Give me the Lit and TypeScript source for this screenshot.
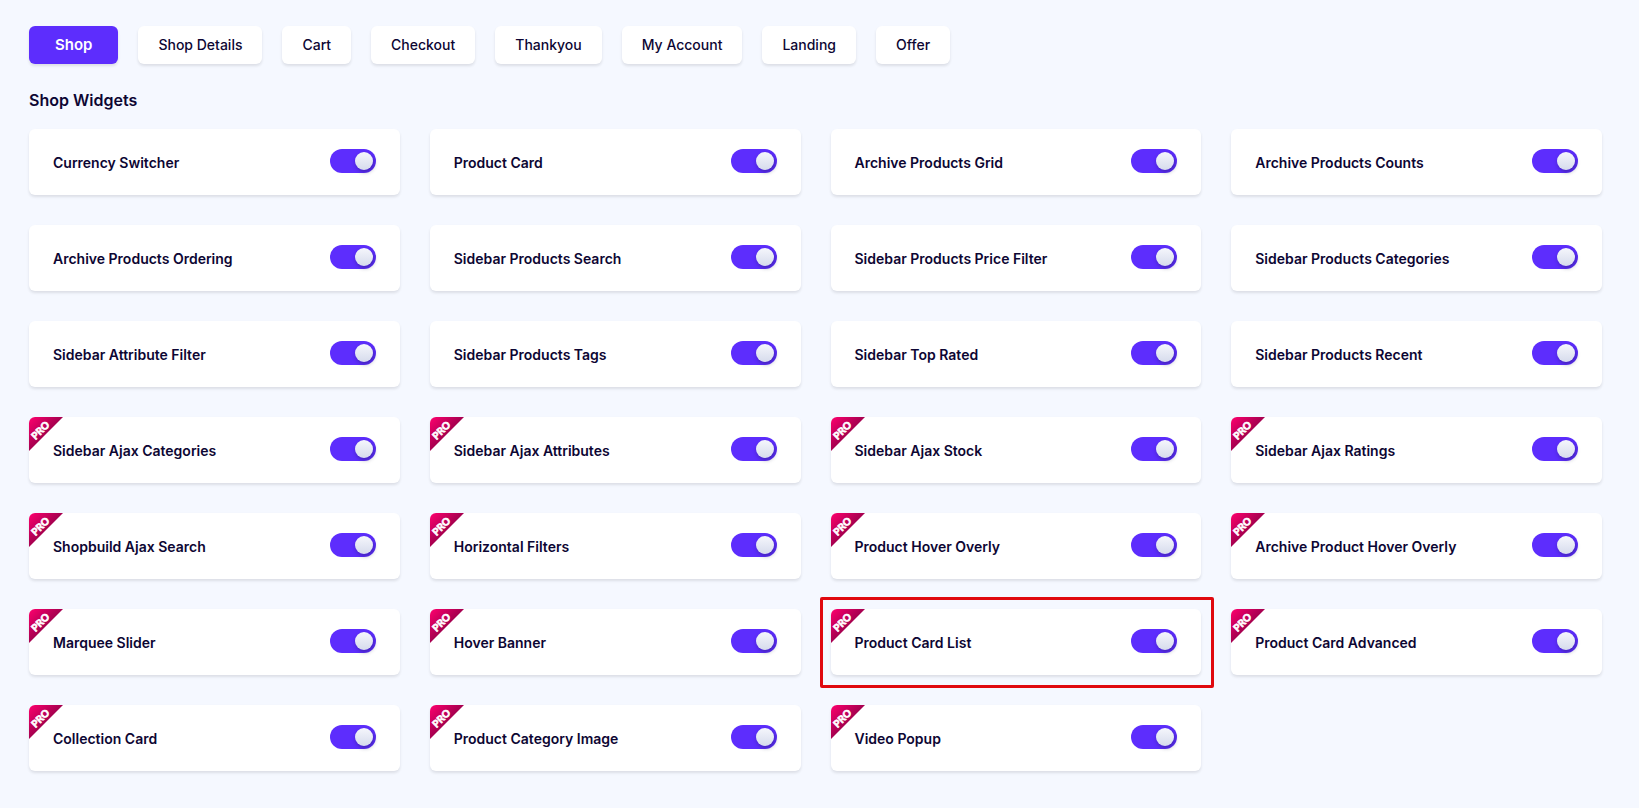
import { LitElement, html, css, nothing } from "lit";
import { customElement, property, state } from "lit/decorators.js";
import { classMap } from "lit/directives/class-map.js";

interface Widget {
  name: string;
  pro?: boolean;
  marked?: boolean;
}

const TABS = ["Shop", "Shop Details", "Cart", "Checkout", "Thankyou", "My Account", "Landing", "Offer"];

const WIDGETS: Widget[] = [
  { name: "Currency Switcher" },
  { name: "Product Card" },
  { name: "Archive Products Grid" },
  { name: "Archive Products Counts" },
  { name: "Archive Products Ordering" },
  { name: "Sidebar Products Search" },
  { name: "Sidebar Products Price Filter" },
  { name: "Sidebar Products Categories" },
  { name: "Sidebar Attribute Filter" },
  { name: "Sidebar Products Tags" },
  { name: "Sidebar Top Rated" },
  { name: "Sidebar Products Recent" },
  { name: "Sidebar Ajax Categories", pro: true },
  { name: "Sidebar Ajax Attributes", pro: true },
  { name: "Sidebar Ajax Stock", pro: true },
  { name: "Sidebar Ajax Ratings", pro: true },
  { name: "Shopbuild Ajax Search", pro: true },
  { name: "Horizontal Filters", pro: true },
  { name: "Product Hover Overly", pro: true },
  { name: "Archive Product Hover Overly", pro: true },
  { name: "Marquee Slider", pro: true },
  { name: "Hover Banner", pro: true },
  { name: "Product Card List", pro: true, marked: true },
  { name: "Product Card Advanced", pro: true },
  { name: "Collection Card", pro: true },
  { name: "Product Category Image", pro: true },
  { name: "Video Popup", pro: true },
];

@customElement("widget-card")
export class WidgetCard extends LitElement {
  @property({ type: String }) name = "";
  @property({ type: Boolean }) pro = false;
  @property({ type: Boolean }) marked = false;

  static styles = css`
    :host {
      display: block;
    }
    .card {
      position: relative;
      display: flex;
      align-items: flex-start;
      justify-content: space-between;
      gap: 16px;
      padding: 20px 24px 22px;
      background: #fff;
      border-radius: 6px;
      box-shadow: 0 2px 3px rgba(20, 20, 30, 0.11);
    }
    .marked::after {
      content: "";
      position: absolute;
      inset: -12px -13px -13px -11px;
      border: 3px solid #e0090f;
      border-radius: 2px;
      pointer-events: none;
    }
    .name {
      padding-top: 4px;
      font-size: 14px;
      line-height: 20px;
      font-weight: 600;
      color: #0d0633;
    }
    .switch {
      appearance: none;
      flex: none;
      display: flex;
      justify-content: flex-start;
      align-items: center;
      box-sizing: border-box;
      width: 46px;
      height: 24px;
      margin: 0;
      padding: 3px;
      border-radius: 12px;
      background: #c9cde0;
      cursor: pointer;
    }
    .switch:checked {
      justify-content: flex-end;
      background: #5d2dfd;
    }
    .switch::before {
      content: "";
      width: 18px;
      height: 18px;
      border-radius: 50%;
      background: linear-gradient(#f5f6fc, #d6dbec);
      box-shadow: 1px 2px 4px rgba(20, 20, 60, 0.4);
    }
    .badge {
      position: absolute;
      top: 0;
      left: 0;
      width: 34px;
      height: 34px;
      border-radius: 6px 0 0 0;
      overflow: hidden;
    }
    .badge text {
      font: 900 10px Lato, sans-serif;
      fill: #fff;
      stroke: #fff;
      stroke-width: 0.6px;
    }
  `;

  render() {
    return html`
      <div class=${classMap({ card: true, marked: this.marked })}>
        ${this.pro
          ? html`<svg class="badge" viewBox="0 0 34 34">
              <defs>
                <linearGradient id="pro" x1="0" y1="0" x2="1" y2="1">
                  <stop offset="0" stop-color="#ff006e" />
                  <stop offset="0.5" stop-color="#a6004f" />
                </linearGradient>
              </defs>
              <path d="M0 0H34L0 34Z" fill="url(#pro)" />
              <text x="11" y="17" text-anchor="middle" transform="rotate(-45 11 13)">PRO</text>
            </svg>`
          : nothing}
        <label class="name" for="toggle">${this.name}</label>
        <input class="switch" id="toggle" type="checkbox" role="switch" checked />
      </div>
    `;
  }
}

@customElement("app-root")
export class AppRoot extends LitElement {
  @state() private active = "Shop";

  static styles = css`
    :host {
      display: block;
      box-sizing: border-box;
      min-height: 100vh;
      padding: 26px 37px 36px 29px;
      background: #f5f8ff;
      color: #0d0633;
      font-family: Inter, sans-serif;
    }
    .tabs {
      display: flex;
      flex-wrap: wrap;
      gap: 20px;
    }
    .tab {
      height: 38px;
      padding: 0 20px;
      border: 0;
      border-radius: 6px;
      background: #fff;
      box-shadow: 0 2px 3px rgba(20, 20, 30, 0.11);
      color: inherit;
      font-family: inherit;
      font-size: 14px;
      line-height: 20px;
      font-weight: 500;
      cursor: pointer;
    }
    .active {
      padding: 0 26px;
      background: #5d2dfd;
      color: #fff;
      font-size: 15px;
      font-weight: 600;
    }
    .title {
      margin: 24px 0 17px;
      font-size: 16px;
      line-height: 24px;
      font-weight: 600;
    }
    .grid {
      display: grid;
      grid-template-columns: repeat(4, minmax(0, 1fr));
      gap: 30px;
    }
    @media (max-width: 1100px) {
      .grid {
        grid-template-columns: repeat(2, minmax(0, 1fr));
      }
    }
  `;

  render() {
    return html`
      <nav class="tabs">
        ${TABS.map(
          (tab) => html`<button
            type="button"
            class=${classMap({ tab: true, active: tab === this.active })}
            @click=${() => (this.active = tab)}
          >${tab}</button>`
        )}
      </nav>
      <h2 class="title">Shop Widgets</h2>
      <section class="grid">
        ${WIDGETS.map(
          (w) => html`<widget-card .name=${w.name} .pro=${!!w.pro} .marked=${!!w.marked}></widget-card>`
        )}
      </section>
    `;
  }
}
